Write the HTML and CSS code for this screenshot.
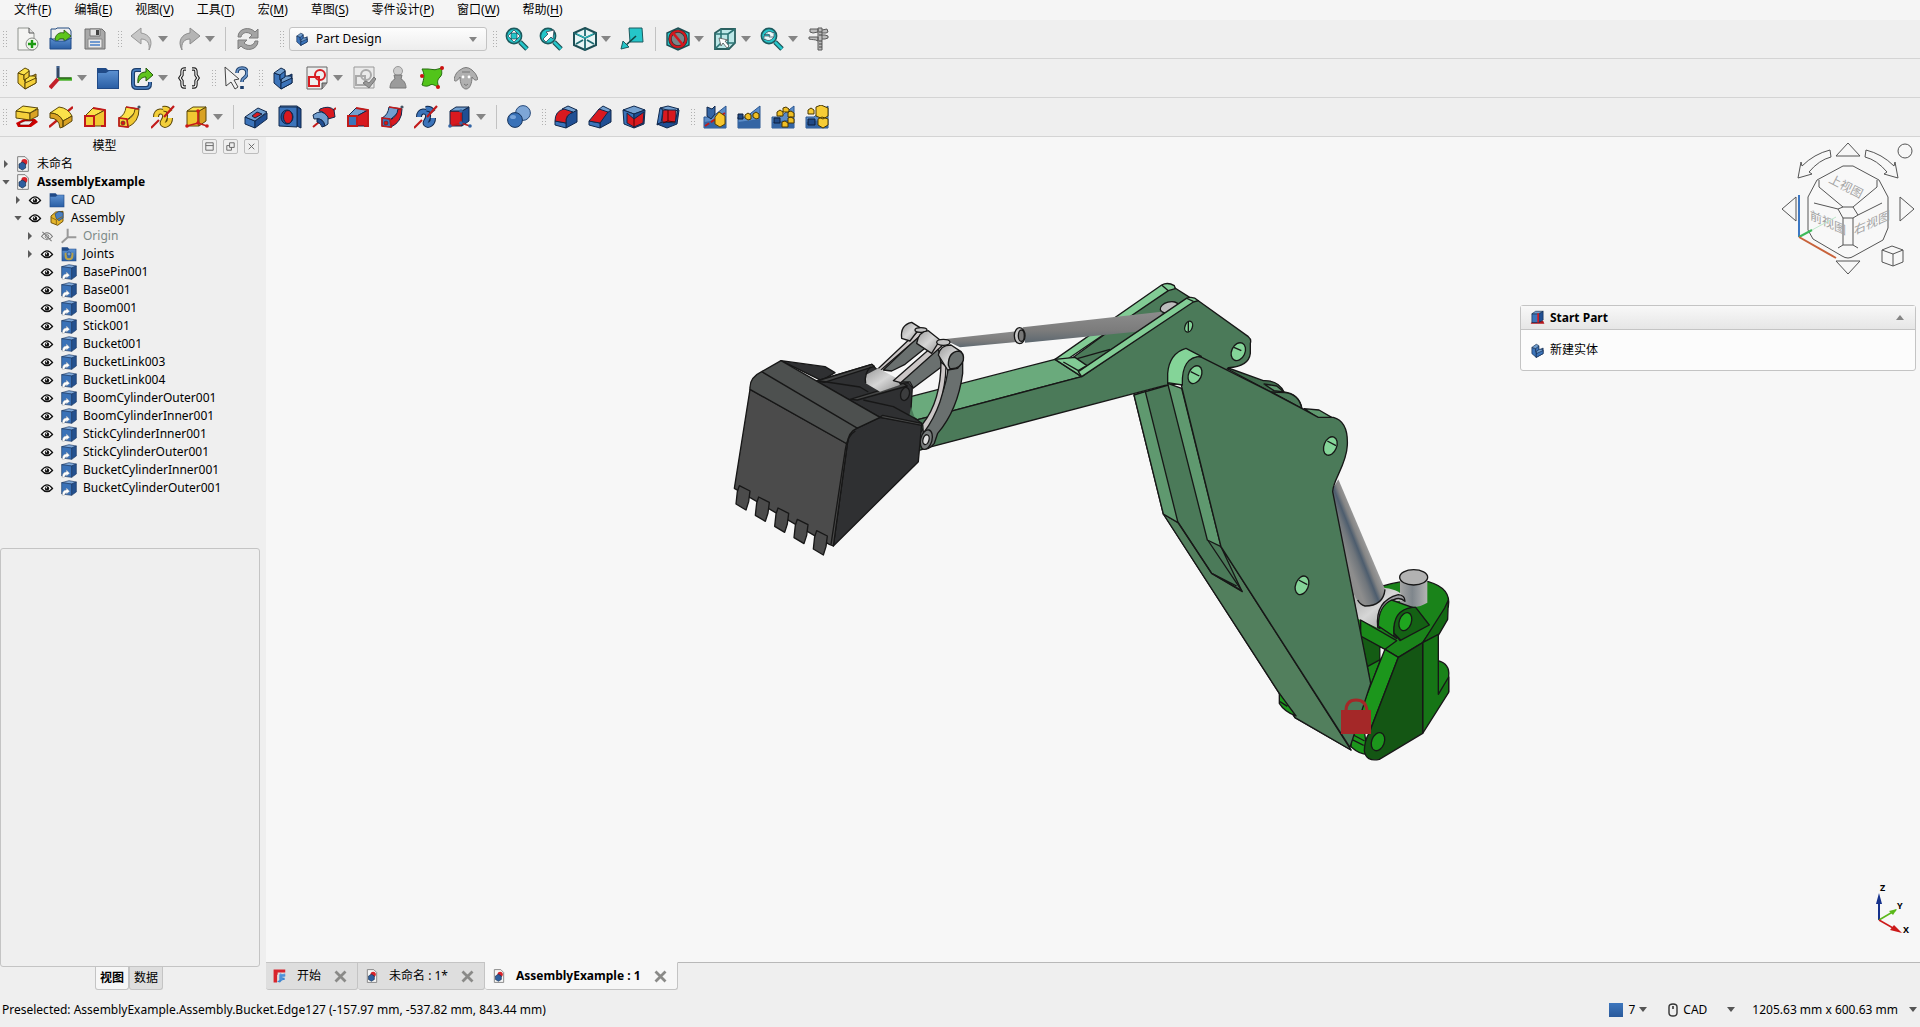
FILE: index.html
```html
<!DOCTYPE html>
<html lang="zh-CN">
<head>
<meta charset="utf-8">
<title>AssemblyExample - FreeCAD</title>
<link rel="stylesheet" href="styles.css">
</head>
<body>
<svg class="defs" aria-hidden="true">
<defs>
<linearGradient id="pin" x1="0" y1="0" x2="1" y2="0"><stop offset="0" stop-color="#a4a4a4"/><stop offset=".45" stop-color="#7f868c"/><stop offset="1" stop-color="#b4b4b4"/></linearGradient>
<linearGradient id="ram" gradientUnits="userSpaceOnUse" x1="322" y1="60" x2="392" y2="32"><stop offset="0" stop-color="#8d8d8d"/><stop offset=".35" stop-color="#6f757b"/><stop offset=".55" stop-color="#4d5d6e"/><stop offset=".72" stop-color="#858585"/><stop offset="1" stop-color="#a2a2a2"/></linearGradient>
<linearGradient id="tube" x1="0" y1="0" x2="0" y2="1"><stop offset="0" stop-color="#8c8c8c"/><stop offset=".6" stop-color="#7c7c7c"/><stop offset="1" stop-color="#5d6870"/></linearGradient>
<linearGradient id="chrome" x1="0" y1="0" x2="1" y2="1"><stop offset="0" stop-color="#9b9b9b"/><stop offset=".5" stop-color="#d6d6d6"/><stop offset="1" stop-color="#8f8f8f"/></linearGradient>
<linearGradient id="blueg" x1="0" y1="0" x2="0" y2="1"><stop offset="0" stop-color="#5b90d0"/><stop offset="1" stop-color="#2b5fa5"/></linearGradient>
</defs>
<symbol id="new" viewBox="0 0 24 24"><path d="M3 1h11l5 5v17H3z" fill="#f4f4f2" stroke="#8f938e"/><path d="M14 1v5h5" fill="#ddd" stroke="#555"/><circle cx="17" cy="17" r="6" fill="#eef6ea" stroke="#888"/><path d="M17 13v8M13 17h8" stroke="#1c9a12" stroke-width="2.4"/></symbol>
<symbol id="open" viewBox="0 0 24 24"><path d="M2 2h5l1-1h12l2 3v8H2z" fill="#eee" stroke="#234a80"/><path d="M6 12c1-6 6-7 9-6V3l7 6-7 6v-3c-4-1-6 0-7 4z" fill="#5fc51c" stroke="#205008" stroke-width=".8"/><path d="M1 11l5 3h10l6-3v11H1z" fill="url(#blueg)" stroke="#204a87"/></symbol>
<symbol id="save" viewBox="0 0 24 24"><path d="M3 2h16l3 3v17H2V2z" fill="#a9a9a9" stroke="#6f6f6f"/><path d="M7 2h10v7H7z" fill="#e6e6e6" stroke="#777"/><path d="M13 3h3v5h-3z" fill="#444"/><path d="M5 12h14v9H5z" fill="#e8e8e8" stroke="#888"/><path d="M7 15h10M7 18h10" stroke="#477fc6" stroke-width="1.4"/></symbol>
<symbol id="undo" viewBox="0 0 24 24"><path d="M1 9l10-8v5c8 1 13 8 8 17 1-7-2-11-8-11v5z" fill="#c6c6c6" stroke="#989898"/></symbol>
<symbol id="redo" viewBox="0 0 24 24"><path d="M23 9L13 1v5C5 7 0 14 5 23c-1-7 2-11 8-11v5z" fill="#b4b4b4" stroke="#8c8c8c"/></symbol>
<symbol id="refresh" viewBox="0 0 24 24"><path d="M2 10c0-9 12-11 17-5l3-3v9h-9l3-3C12 4 6 5 5 10zM22 14c0 9-12 11-17 5l-3 3v-9h9l-3 3c4 4 10 3 11-2z" fill="#a4a4a4" stroke="#7c7c7c"/></symbol>
<symbol id="part" viewBox="0 0 24 24"><g class="edge"><path class="b3" d="M13 12l8-4v9l-11 6v-7z"/><path class="b1" d="M3 7v10l7 6v-7l-1-3V9z"/><path class="b2" d="M3 7l7-5 4 2v6l6 0 1 3-8 5-3-2 1-4-2-3z"/><path class="b1" d="M9 9l5-4v6l-5 3zM10 17l11-5v5l-11 6z"/></g></symbol>
<symbol id="axis" viewBox="0 0 24 24"><path d="M9 12V0" stroke="#41618c" stroke-width="3.2"/><path d="M9 13h14" stroke="#3fae20" stroke-width="3.4"/><path d="M9 13L1 22" stroke="#c3202a" stroke-width="4"/><path d="M10 12h12M9 12V2" stroke="#222" stroke-width=".8"/></symbol>
<symbol id="axisoff" viewBox="0 0 24 24"><path d="M10 14V1M10 14h13M10 14L1 22" stroke="#999" stroke-width="3"/></symbol>
<symbol id="folder" viewBox="0 0 24 24"><path d="M1 2h9l2 2h11v19H1z" fill="#204a87"/><path d="M2 7h8l3-2h9v17H2z" fill="url(#blueg)"/></symbol>
<symbol id="link" viewBox="0 0 24 24"><path d="M11 4H6Q3 4 3 7v11q0 4 4 4h9q4 0 4-4v-2" fill="none" stroke="#1d3f6c" stroke-width="4"/><path d="M11 4H6Q3 4 3 7v11q0 4 4 4h9q4 0 4-4v-2" fill="none" stroke="#4c84c6" stroke-width="1.6"/><path d="M8 17c-1-9 4-11 8-11V2l7 7-7 6v-4c-4 0-6 2-8 6z" fill="#5fc51c" stroke="#245a0c"/></symbol>
<symbol id="braces" viewBox="0 0 24 24"><path d="M9 3H7Q5 3 5 6v3l-2 3 2 3v3q0 3 2 3h2M15 3h2q2 0 2 3v3l2 3-2 3v3q0 3-2 3h-2" fill="none" stroke="#222" stroke-width="3.4"/><path d="M9 3H7Q5 3 5 6v3l-2 3 2 3v3q0 3 2 3h2M15 3h2q2 0 2 3v3l2 3-2 3v3q0 3-2 3h-2" fill="none" stroke="#fff" stroke-width="1.2"/></symbol>
<symbol id="whats" viewBox="0 0 24 24"><path d="M13 7q0-5 5-5t5 5q0 3-3 5-2 1-2 4M18 20v3" fill="none" stroke="#1d3f6c" stroke-width="3.6"/><path d="M13 7q0-5 5-5t5 5q0 3-3 5-2 1-2 4" fill="none" stroke="#6b97cb" stroke-width="1.6"/><path d="M1 1l14 12-5 1 4 7-3 2-4-7-5 4z" fill="#f2f2f2" stroke="#444"/></symbol>
<symbol id="sketch" viewBox="0 0 24 24"><path d="M2 1h20v16l-5 6H2z" fill="#eee" stroke="#666"/><path d="M17 23v-6h5" fill="#999" stroke="#555"/><path d="M4 11h10v9H4z" fill="none" stroke="#d81b20" stroke-width="2"/><circle cx="15" cy="9" r="5" fill="none" stroke="#d81b20" stroke-width="2"/></symbol>
<symbol id="sketchok" viewBox="0 0 24 24"><path d="M2 1h20v21H2z" fill="#eaeaea" stroke="#999"/><path d="M4 10h9v9H4z" fill="none" stroke="#aaa" stroke-width="2"/><circle cx="14" cy="9" r="5" fill="none" stroke="#aaa" stroke-width="2"/><path d="M11 17l3-2 3 2 5-6 2 2-7 9z" fill="#999" stroke="#777"/></symbol>
<symbol id="pawn" viewBox="0 0 24 24"><circle cx="12" cy="5" r="4.5" fill="#ccc" stroke="#999"/><path d="M8 9h8l-1 4c4 2 5 6 5 9H4c0-3 1-7 5-9z" fill="#9b9b9b" stroke="#777"/></symbol>
<symbol id="surface" viewBox="0 0 24 24"><path d="M2 3h6q7 2 14-1c-1 4 1 6-2 9s-3 6-1 10c-3 0-6-4-9-2s-6 1-8 0c2-6 3-11 0-16z" fill="#52c41a" stroke="#236b0c"/><circle cx="22" cy="2" r="2" fill="#c11"/><circle cx="2" cy="10" r="2" fill="#c11"/><circle cx="18" cy="21" r="2" fill="#c11"/></symbol>
<symbol id="sheep" viewBox="0 0 24 24"><path d="M6 4q6-5 12 0 4 3 6 9-3 3-6-2c0 6-2 12-6 12s-6-6-6-12c-3 5-6 5-6 2 2-6 3-7 6-9z" fill="#b0b0b0" stroke="#7a7a7a"/><circle cx="9" cy="11" r="1.4" fill="#fff"/><circle cx="15" cy="11" r="1.4" fill="#fff"/><path d="M10 18q2 3 4 0M8 6h8" stroke="#777" fill="none"/></symbol>
<symbol id="fit" viewBox="0 0 24 24"><path d="M15 15l7 7" stroke="#1c4f53" stroke-width="5"/><path d="M15 15l7 7" stroke="#25c5c9" stroke-width="2.6"/><circle cx="9" cy="9" r="7.6" fill="#25c5c9" stroke="#1c5a5e" stroke-width="1.6"/><path d="M9 3l3 3H6zM9 15l3-3H6zM3 9l3-3v6zM15 9l-3-3v6z" fill="#fff" stroke="#123" stroke-width=".6"/></symbol>
<symbol id="fitsel" viewBox="0 0 24 24"><path d="M15 15l7 7" stroke="#1c4f53" stroke-width="5"/><path d="M15 15l7 7" stroke="#25c5c9" stroke-width="2.6"/><circle cx="9" cy="9" r="7.6" fill="#25c5c9" stroke="#1c5a5e" stroke-width="1.6"/><path d="M15 3l-8 2 2 2-5 5 3 3 5-5 2 2z" fill="#fff" stroke="#345" stroke-width=".8"/></symbol>
<symbol id="viewsync" viewBox="0 0 24 24"><path d="M15 15l7 7" stroke="#1c4f53" stroke-width="5"/><path d="M15 15l7 7" stroke="#25c5c9" stroke-width="2.6"/><circle cx="9" cy="9" r="7.6" fill="#25c5c9" stroke="#1c5a5e" stroke-width="1.6"/><path d="M4 8q5-6 9-2l1-1v5H9l1-2Q7 6 4 8zm10 2q-5 6-9 2l-1 1V9h5" fill="#e6fafa" stroke="#345" stroke-width=".7"/></symbol>
<symbol id="iso" viewBox="0 0 24 24"><path d="M12 1l11 5v12l-11 5-11-5V6z" fill="#e8f6f6" stroke="#1d4f55" stroke-width="2"/><path d="M1 6l11 5 11-5M12 11v12M12 2v7M3 17l7-4M21 17l-7-4" fill="none" stroke="#1d6a70" stroke-width="1.8"/><path d="M4 7l8 4 8-4" fill="none" stroke="#25c5c9" stroke-width="1"/></symbol>
<symbol id="align" viewBox="0 0 24 24"><path d="M9 1h13l1 14H10z" fill="#25c5c9" stroke="#1c5a5e"/><path d="M16 9L5 19" stroke="#144" stroke-width="1.6"/><path d="M1 22l2-8 6 6z" fill="#25c5c9" stroke="#1c5a5e"/></symbol>
<symbol id="nodraw" viewBox="0 0 24 24"><path d="M12 1l11 5v12l-11 5-11-5V6z" fill="#25c5c9" stroke="#1d4f55" stroke-width="1.4"/><circle cx="12" cy="12" r="8" fill="#79868a" stroke="#333" stroke-width="3.6"/><circle cx="12" cy="12" r="8" fill="none" stroke="#d4161d" stroke-width="2.2"/><path d="M7 6l10 12" stroke="#d4161d" stroke-width="2.6"/></symbol>
<symbol id="boxsel" viewBox="0 0 24 24"><path d="M2 6l6-4h14v14l-6 6H2z" fill="#bce8e8" stroke="#2b6060" stroke-width="1.8"/><path d="M2 7h13v15M15 7l7-5M8 2v14h14M8 16l-6 6" fill="none" stroke="#2b7474" stroke-width="1.6"/><path d="M6 11l9 2-3 1 4 5-2 2-4-5-2 3z" fill="#fff" stroke="#555" stroke-width=".8"/></symbol>
<symbol id="caliper" viewBox="0 0 24 24"><path d="M11 1h4v22h-4zM3 2h8v3l-5 1-3-1zM15 3l5-1 1 3-2 1h-4M2 10h9v4c-3-2-6-1-9-2zM15 8h3l3 1v2l-3 1h-3" fill="#bbb" stroke="#5a5a5a"/><path d="M12 14h3M12 17h3M12 20h3M12 5h3M12 8h3" stroke="#444"/></symbol>
<symbol id="pad" viewBox="0 0 24 24"><path d="M1 18l8-4h11l3 3-7 5H3z" fill="#c00"/><path d="M5 18l5-2h8l-4 4H5z" fill="#eee" stroke="#600" stroke-width=".6"/><g class="edge"><path class="b1" d="M1 6l14 2v7L1 13z"/><path class="b3" d="M15 8l8-4v7l-8 4z"/><path class="b2" d="M1 6l7-5 15 2-8 5z"/></g></symbol>
<symbol id="revolve" viewBox="0 0 24 24"><path d="M0 22L24 2" stroke="#c21a1a" stroke-width="2.4"/><g class="edge"><path class="b2" d="M1 8l9-6q9 1 13 9l-9 5Q10 8 1 8z"/><path class="b3" d="M14 16l9-5v5l-9 6zM1 8q9 0 13 8v6l-3 1q-1-10-10-10z"/></g></symbol>
<symbol id="loft" viewBox="0 0 24 24"><g class="edge"><path class="b2" d="M2 11l8-8 12 2-11 6z"/><path class="b4" d="M11 11l11-6v16l-11 0z"/><path class="b1" d="M2 11h9v10H2z"/></g><path d="M10 3l12 2v16l-4 0M2 11h9v10H2z" stroke="#c21a1a" stroke-width="2" fill="none"/></symbol>
<symbol id="sweep" viewBox="0 0 24 24"><g class="edge"><path class="b2" d="M2 13Q8 10 9 2l13 2-12 11z"/><path class="b4" d="M10 15q7-3 8-11l4 0q0 13-11 18z"/><path class="b1" d="M2 13l8 1 1 8-9-1z"/></g><path d="M2 13l8 1 1 8-9-1zM9 2l13 2" stroke="#c21a1a" stroke-width="1.6" fill="none"/><circle cx="6" cy="18" r="2" fill="#d11" stroke="#333" stroke-width=".6"/><circle cx="22" cy="2" r="1.6" fill="#456"/></symbol>
<symbol id="helix" viewBox="0 0 24 24"><path d="M0 23l8-8" stroke="#c21a1a" stroke-width="2.2"/><path class="coilline" d="M5 12C5 5 13 5 14 10S10 17 12 19 19 19 19 13"/><path class="coil" d="M5 12C5 5 13 5 14 10S10 17 12 19 19 19 19 13"/><path class="coilline" d="M12 4q4-1 7 3"/><path class="coil" d="M12 4q4-1 7 3"/><path d="M13 12L23 1" stroke="#c21a1a" stroke-width="2.2"/></symbol>
<symbol id="box" viewBox="0 0 24 24"><g class="edge"><path class="b4" d="M2 6h12v15H2z"/><path class="b3" d="M14 6l7-4v14l-7 5z"/><path class="b2" d="M2 6l6-4h13l-7 4z"/></g><path d="M13 7v11M2 21l11-3 9 3" stroke="#c21a1a" stroke-width="1.6" fill="none"/><g class="dot"><circle cx="13" cy="6" r="1.8"/><circle cx="13" cy="18" r="1.8"/><circle cx="2" cy="21" r="1.8"/><circle cx="22" cy="21" r="1.8"/></g></symbol>
<symbol id="startpart" viewBox="0 0 24 24"><path d="M1 22l3-5h17l2 5z" fill="#b3161c"/><path d="M3 6h11v14H3z" fill="#3c74ba" stroke="#10284c"/><path d="M14 6l7-4v14l-7 4z" fill="#204f94" stroke="#10284c"/><path d="M3 6l6-4h12l-7 4z" fill="#729fcf" stroke="#10284c"/><path d="M13 5v15" stroke="#d9191f" stroke-width="2.6"/></symbol>
<symbol id="pocket" viewBox="0 0 24 24"><g class="edge"><path class="b1" d="M1 12l10 4v7L1 19z"/><path class="b3" d="M11 16l12-8v6l-12 9z"/><path class="b2" d="M1 12L14 3l9 4-12 9z"/><path class="b4" d="M8 11l5-4 5 2-7 4z"/></g></symbol>
<symbol id="hole" viewBox="0 0 24 24"><g class="edge"><path class="b2" d="M2 1h17l4 3H5z"/><path class="b3" d="M19 2l4 2v19l-4-2z"/><path class="b1" d="M1 2h18v20l-18-1z"/><ellipse class="b3" cx="9" cy="12" rx="6" ry="7"/><ellipse class="b4" cx="10" cy="12" rx="4.5" ry="6.5"/></g></symbol>
<symbol id="groove" viewBox="0 0 24 24"><path d="M1 22L24 3" stroke="#c21a1a" stroke-width="2"/><g class="edge"><path class="b4" d="M8 4q9-4 14 1l1 7-7 2q-3-8-9-8z"/><path class="b2" d="M1 10q9-7 15 2v7l-3 2q-2-9-11-7z"/><path class="b3" d="M5 14q6-1 8 7l-3 1q-1-4-5-5z"/></g></symbol>
<symbol id="bool" viewBox="0 0 24 24"><circle cx="16" cy="8" r="7.4" fill="#7ea6d6" stroke="#2a4c7c"/><circle cx="8" cy="15" r="7.4" fill="#3a72b8" stroke="#18345c"/><ellipse cx="6" cy="12" rx="3" ry="2" fill="#78a4da"/></symbol>
<symbol id="fillet" viewBox="0 0 24 24"><g class="edge"><path class="b3" d="M12 17q0-7 7-10l4-2v12l-11 6z"/><path class="b2" d="M8 4l6-3 9 4-5 3z"/><path class="b1" d="M1 16l11 2v5L1 20z"/><path class="b4" d="M1 16q0-10 9-12l9 3q-8 3-7 11z"/></g></symbol>
<symbol id="chamfer" viewBox="0 0 24 24"><g class="edge"><path class="b3" d="M12 18l7-11 4-2v12l-11 6z"/><path class="b2" d="M10 5l5-4 8 4-4 3z"/><path class="b1" d="M1 16l11 2v5L1 20z"/><path class="b4" d="M1 16l10-12 9 3-8 11z"/></g></symbol>
<symbol id="draft" viewBox="0 0 24 24"><g class="edge"><path class="b2" d="M1 5l11-4 11 4-11 4z"/><path class="b1" d="M1 5l11 4v14L2 19z"/><path class="b3" d="M12 9l11-4-1 14-10 4z"/><path class="b4" d="M5 8l7 6 10-7-1 11-9 4-7-4z"/></g><path d="M12 14v8" stroke="#500"/></symbol>
<symbol id="thick" viewBox="0 0 24 24"><g class="edge"><path class="b2" d="M4 3l8-2 11 3-5 3z"/><path class="b1" d="M4 3l3 2-2 13-4 2z"/><path class="b4" d="M7 5h13v12l-14 1z"/><path class="b3" d="M1 19l6-2 12 1 3-14 1 1-2 14-10 4z"/></g><path d="M12 5v11l7 1M12 16l-5 2" stroke="#500" fill="none"/></symbol>
<symbol id="patA" viewBox="0 0 24 24"><path d="M1 12l8 0 14-11v22H1z" fill="#5b8cc8" stroke="#2a5690"/><path d="M1 17l22-3v9H1z" fill="#3465a4"/></symbol>
<symbol id="mirror" viewBox="0 0 24 24"><use href="#patA"/><path d="M2 21L22 8" stroke="#c21a1a" stroke-width="2" stroke-dasharray="5 2"/><path d="M4 2l5 2 3-3v8l-4 5-4-3z" fill="#3465a4" stroke="#12294c"/><path d="M12 12l4-5 6 4v8l-5 3-5-3z" fill="#f6c62e" stroke="#5a4300"/></symbol>
<symbol id="linear" viewBox="0 0 24 24"><use href="#patA"/><path d="M1 9h5v5H1z" fill="#204a87" stroke="#0c1f3c"/><path d="M8 10l3-2 3 2v4l-3 1-3-2zM16 9l3-2 3 2v4l-3 1-3-2z" fill="#f0bf24" stroke="#4a3800"/></symbol>
<symbol id="polar" viewBox="0 0 24 24"><use href="#patA"/><path d="M3 13h6v5H3z" fill="#204a87" stroke="#0c1f3c"/><g fill="#f0bf24" stroke="#4a3800"><path d="M6 7l3-2 3 2v4H6zM12 3l3-1 3 2v3h-6zM17 7l3-1 3 2v4h-6zM11 17l3-1 3 2v4h-6zM17 13l3-1 3 2v4h-6z"/></g></symbol>
<symbol id="multi" viewBox="0 0 24 24"><use href="#patA"/><g fill="#f6cc35" stroke="#4a3800"><path d="M3 5l3-2 3 2v4H3zM11 2l5-2 7 3v8l-5 3-7-3zM13 14l4-2 6 2v6l-5 3-5-3z"/></g><path d="M3 14h7v6H3z" fill="#204a87" stroke="#0c1f3c"/></symbol>
<symbol id="doc" viewBox="0 0 24 24"><path d="M4 1h11l5 5v17H4z" fill="#f5f5f5" stroke="#777" stroke-width="1.4"/><circle cx="14" cy="9" r="4.5" fill="#d8232a"/><path d="M6 12l5-3 5 3v6l-5 3-5-3z" fill="#2f5f9f" stroke="#102846"/></symbol>
<symbol id="eye" viewBox="0 0 14 12"><path d="M1 6q6-8 12 0-6 7-12 0z" fill="#fff" stroke="#111" stroke-width="1.4"/><circle cx="7" cy="6" r="2.4" fill="#111"/><circle cx="6.3" cy="5.2" r=".8" fill="#fff"/></symbol>
<symbol id="eyeoff" viewBox="0 0 14 12"><path d="M1 6q6-8 12 0-6 7-12 0zM2 1l10 10" fill="none" stroke="#777" stroke-width="1.1"/><circle cx="7" cy="6" r="2" fill="none" stroke="#777"/></symbol>
<symbol id="asm" viewBox="0 0 24 24"><path d="M3 9l7-6 11-1v15l-8 6-10-4z" fill="#e5b52b" stroke="#6a4e04" stroke-width="1.4"/><path d="M9 6l6-4 6 2v8l-6 4-4-3z" fill="#4a80c2" stroke="#26406a"/><path d="M3 11l8 4v7M11 15l9-5" stroke="#8a6810" fill="none" stroke-width="1.4"/></symbol>
<symbol id="joints" viewBox="0 0 24 24"><use href="#folder"/><path d="M7 10v5q0 5 5 5t5-5v-5" fill="none" stroke="#b9a24a" stroke-width="3"/><circle cx="12" cy="12" r="3" fill="#6e9bd2" stroke="#204a87"/></symbol>
<symbol id="solid" viewBox="0 0 24 24"><path d="M1 4L12 1l11 2-7 3z" fill="#7fa9da" stroke="#1b3a66"/><path d="M1 4l15 2v17L1 21z" fill="#3a72b8" stroke="#1b3a66"/><path d="M16 6l7-3v15l-7 5z" fill="#24518f" stroke="#1b3a66"/><path d="M2 23q0-8 6-8v-3l5 5-5 4v-2q-2 0-3 4z" fill="#fff" stroke="#999" stroke-width=".6"/></symbol>
<symbol id="fc" viewBox="0 0 24 24"><path d="M1 1h20v5H8v4H7v13H1z" fill="#d8252c"/><path d="M11 9h10v4h-5v2h4v4h-4l-4 4-5-1 4-3z" fill="#3f86cf"/><path d="M12 6l4 3 5-2-1 6-4 3 1 4-6-2z" fill="#5a9be0" opacity=".6"/></symbol>
<symbol id="x" viewBox="0 0 24 24"><path d="M4 4l16 16M20 4L4 20" stroke="#8a8a88" stroke-width="4.5"/></symbol>
<symbol id="down" viewBox="0 0 10 6"><path d="M0 0h10L5 6z"/></symbol>
</svg>

<nav class="menubar">
<button>文件(<u>F</u>)</button><button>编辑(<u>E</u>)</button><button>视图(<u>V</u>)</button><button>工具(<u>T</u>)</button><button>宏(<u>M</u>)</button><button>草图(<u>S</u>)</button><button>零件设计(<u>P</u>)</button><button>窗口(<u>W</u>)</button><button>帮助(<u>H</u>)</button>
</nav>

<div class="toolrow">
<div class="bar"><i class="grip"></i>
<button class="tool" aria-label="新建"><svg><use href="#new"/></svg></button>
<button class="tool" aria-label="打开"><svg><use href="#open"/></svg></button>
<button class="tool" aria-label="保存"><svg><use href="#save"/></svg></button></div>
<div class="bar"><i class="grip"></i>
<button class="tool drop" aria-label="撤销"><svg><use href="#undo"/></svg><svg class="arrow"><use href="#down"/></svg></button>
<button class="tool drop" aria-label="重做"><svg><use href="#redo"/></svg><svg class="arrow"><use href="#down"/></svg></button>
<i class="sep"></i>
<button class="tool" aria-label="刷新"><svg><use href="#refresh"/></svg></button></div>
<div class="bar bench"><i class="grip"></i>
<div class="combo blue"><svg class="comboicon"><use href="#part"/></svg><select aria-label="工作台"><option>Part Design</option></select><svg class="arrow"><use href="#down"/></svg></div></div>
<div class="bar"><i class="grip"></i>
<button class="tool" aria-label="适应全部"><svg><use href="#fit"/></svg></button>
<button class="tool" aria-label="适应选择"><svg><use href="#fitsel"/></svg></button>
<button class="tool drop" aria-label="等轴测"><svg><use href="#iso"/></svg><svg class="arrow"><use href="#down"/></svg></button>
<button class="tool" aria-label="对齐"><svg><use href="#align"/></svg></button>
<i class="sep"></i>
<button class="tool drop" aria-label="绘图样式"><svg><use href="#nodraw"/></svg><svg class="arrow"><use href="#down"/></svg></button>
<button class="tool drop" aria-label="框选"><svg><use href="#boxsel"/></svg><svg class="arrow"><use href="#down"/></svg></button>
<button class="tool drop" aria-label="同步视图"><svg><use href="#viewsync"/></svg><svg class="arrow"><use href="#down"/></svg></button>
<button class="tool" aria-label="测量"><svg><use href="#caliper"/></svg></button></div>
</div>

<div class="toolrow">
<div class="bar"><i class="grip"></i>
<button class="tool yellow" aria-label="零件"><svg><use href="#part"/></svg></button>
<button class="tool drop" aria-label="坐标系"><svg><use href="#axis"/></svg><svg class="arrow"><use href="#down"/></svg></button>
<button class="tool" aria-label="组"><svg><use href="#folder"/></svg></button>
<button class="tool drop" aria-label="链接"><svg><use href="#link"/></svg><svg class="arrow"><use href="#down"/></svg></button>
<button class="tool" aria-label="变量集"><svg><use href="#braces"/></svg></button></div>
<div class="bar"><i class="grip"></i>
<button class="tool" aria-label="这是什么"><svg><use href="#whats"/></svg></button></div>
<div class="bar"><i class="grip"></i>
<button class="tool blue" aria-label="实体"><svg><use href="#part"/></svg></button>
<button class="tool drop" aria-label="草图"><svg><use href="#sketch"/></svg><svg class="arrow"><use href="#down"/></svg></button>
<button class="tool" aria-label="验证草图"><svg><use href="#sketchok"/></svg></button>
<button class="tool" aria-label="检查几何"><svg><use href="#pawn"/></svg></button>
<button class="tool" aria-label="形状绑定"><svg><use href="#surface"/></svg></button>
<button class="tool" aria-label="克隆"><svg><use href="#sheep"/></svg></button></div>
</div>

<div class="toolrow">
<div class="bar"><i class="grip"></i>
<button class="tool yellow" aria-label="凸台"><svg><use href="#pad"/></svg></button>
<button class="tool yellow" aria-label="旋转"><svg><use href="#revolve"/></svg></button>
<button class="tool yellow" aria-label="放样"><svg><use href="#loft"/></svg></button>
<button class="tool yellow" aria-label="扫掠"><svg><use href="#sweep"/></svg></button>
<button class="tool yellow" aria-label="螺旋"><svg><use href="#helix"/></svg></button>
<button class="tool drop yellow" aria-label="添加图元"><svg><use href="#box"/></svg><svg class="arrow"><use href="#down"/></svg></button>
<i class="sep"></i>
<button class="tool blue" aria-label="凹槽"><svg><use href="#pocket"/></svg></button>
<button class="tool blue" aria-label="孔"><svg><use href="#hole"/></svg></button>
<button class="tool blue" aria-label="旋转槽"><svg><use href="#groove"/></svg></button>
<button class="tool blue" aria-label="减料放样"><svg><use href="#loft"/></svg></button>
<button class="tool blue" aria-label="减料扫掠"><svg><use href="#sweep"/></svg></button>
<button class="tool blue" aria-label="减料螺旋"><svg><use href="#helix"/></svg></button>
<button class="tool drop blue" aria-label="减料图元"><svg><use href="#box"/></svg><svg class="arrow"><use href="#down"/></svg></button>
<i class="sep"></i>
<button class="tool" aria-label="布尔"><svg><use href="#bool"/></svg></button></div>
<div class="bar"><i class="grip"></i>
<button class="tool blue" aria-label="圆角"><svg><use href="#fillet"/></svg></button>
<button class="tool blue" aria-label="倒角"><svg><use href="#chamfer"/></svg></button>
<button class="tool blue" aria-label="拔模"><svg><use href="#draft"/></svg></button>
<button class="tool blue" aria-label="抽壳"><svg><use href="#thick"/></svg></button></div>
<div class="bar"><i class="grip"></i>
<button class="tool" aria-label="镜像"><svg><use href="#mirror"/></svg></button>
<button class="tool" aria-label="线性阵列"><svg><use href="#linear"/></svg></button>
<button class="tool" aria-label="环形阵列"><svg><use href="#polar"/></svg></button>
<button class="tool" aria-label="多重变换"><svg><use href="#multi"/></svg></button></div>
</div>

<main class="work">
<aside class="dock">
<header class="dockhead"><h2>模型</h2>
<button aria-label="折叠"><svg viewBox="0 0 14 14"><path d="M3 3h8v8H3zM3 6h8"/></svg></button>
<button aria-label="浮动"><svg viewBox="0 0 14 14"><path d="M6 3h5v5H6zM6 6H3v5h5V8"/></svg></button>
<button aria-label="关闭"><svg viewBox="0 0 14 14"><path d="M4 4l6 6M10 4l-6 6"/></svg></button></header>
<ul class="tree">
<li><b class="tw shut"></b><svg><use href="#doc"/></svg><span>未命名</span></li>
<li class="active"><b class="tw"></b><svg><use href="#doc"/></svg><span>AssemblyExample</span></li>
<li class="l1"><b class="tw shut"></b><svg class="eye"><use href="#eye"/></svg><svg><use href="#folder"/></svg><span>CAD</span></li>
<li class="l1"><b class="tw"></b><svg class="eye"><use href="#eye"/></svg><svg><use href="#asm"/></svg><span>Assembly</span></li>
<li class="l2 dim"><b class="tw shut"></b><svg class="eye"><use href="#eyeoff"/></svg><svg><use href="#axisoff"/></svg><span>Origin</span></li>
<li class="l2"><b class="tw shut"></b><svg class="eye"><use href="#eye"/></svg><svg><use href="#joints"/></svg><span>Joints</span></li>
<li class="l2"><b class="tw none"></b><svg class="eye"><use href="#eye"/></svg><svg><use href="#solid"/></svg><span>BasePin001</span></li>
<li class="l2"><b class="tw none"></b><svg class="eye"><use href="#eye"/></svg><svg><use href="#solid"/></svg><span>Base001</span></li>
<li class="l2"><b class="tw none"></b><svg class="eye"><use href="#eye"/></svg><svg><use href="#solid"/></svg><span>Boom001</span></li>
<li class="l2"><b class="tw none"></b><svg class="eye"><use href="#eye"/></svg><svg><use href="#solid"/></svg><span>Stick001</span></li>
<li class="l2"><b class="tw none"></b><svg class="eye"><use href="#eye"/></svg><svg><use href="#solid"/></svg><span>Bucket001</span></li>
<li class="l2"><b class="tw none"></b><svg class="eye"><use href="#eye"/></svg><svg><use href="#solid"/></svg><span>BucketLink003</span></li>
<li class="l2"><b class="tw none"></b><svg class="eye"><use href="#eye"/></svg><svg><use href="#solid"/></svg><span>BucketLink004</span></li>
<li class="l2"><b class="tw none"></b><svg class="eye"><use href="#eye"/></svg><svg><use href="#solid"/></svg><span>BoomCylinderOuter001</span></li>
<li class="l2"><b class="tw none"></b><svg class="eye"><use href="#eye"/></svg><svg><use href="#solid"/></svg><span>BoomCylinderInner001</span></li>
<li class="l2"><b class="tw none"></b><svg class="eye"><use href="#eye"/></svg><svg><use href="#solid"/></svg><span>StickCylinderInner001</span></li>
<li class="l2"><b class="tw none"></b><svg class="eye"><use href="#eye"/></svg><svg><use href="#solid"/></svg><span>StickCylinderOuter001</span></li>
<li class="l2"><b class="tw none"></b><svg class="eye"><use href="#eye"/></svg><svg><use href="#solid"/></svg><span>BucketCylinderInner001</span></li>
<li class="l2"><b class="tw none"></b><svg class="eye"><use href="#eye"/></svg><svg><use href="#solid"/></svg><span>BucketCylinderOuter001</span></li>
</ul>
<section class="props"></section>
<div class="proptabs"><button class="on">视图</button><button>数据</button></div>
</aside>

<section class="stage">
<div class="viewport">
<svg class="model" viewBox="266 137 1654 825">
<!-- far boom plate -->
<g class="ln" transform="translate(1120 380) scale(.33333)">
<path fill="#3f6b4c" d="M300-45L430 2q45-2 62 34 45 5 54 50l-96-51z"/><path fill="#4b7a59" d="M455 36l40 2q42 5 50 47z"/><path fill="#5f996f" d="M432 12l38 6 22 18-30-4zM552 86l45 4 38 22-40 2z"/>
<path fill="#4b7a59" d="M42 45L145 15l158 485 390 610-168-97L130 402z"/>
<path fill="#527f5d" d="M130 402l45 26 100 152 90 52-62-132 390 610-168-97z"/>
<path fill="#5f996f" d="M42 45l34-10 98 393-44-26z"/>
<path fill="none" d="M174 428l101 152 92 55-104-155M275 580l75 38"/>
</g>
<!-- base -->
<g class="ln" transform="translate(1240 540) scale(.33333)">
<path fill="#1c961c" d="M118 460v30q15 25 50 38zM120 485l22 14"/>
<path fill="#1a831a" d="M335 125l97 12q60-20 133-12 70 20 60 75l-77 108-73 44-40-24-80-40z"/>
<path fill="#146914" d="M625 180l-2 58-28 48-47 22 66-104z"/>
<path fill="#1a831a" d="M594 362q36 10 32 45v48l-34 45z"/>
<path fill="#167516" d="M548 308l47-25v180l31-52v46l-78 123z"/>
<path fill="#145c14" d="M362 287l58 31v44l-38 20z"/>
<path fill="#1a8a1a" d="M382 380l40-22-30 80z"/>
<path fill="#f7f7f7" stroke="none" d="M422 323l12 5-12 26z"/>
<path fill="#1c961c" d="M435 328l40 24-85 220-57 11 32-80z"/>
<path fill="#1c961c" d="M333 583l40-10 10 70q-25 0-50-23zM335 598l36 18M340 585l34 18"/>
<path fill="#145614" d="M475 352l73-44v272l-130 78q-40 8-45-25 0-30 15-55z"/>
<ellipse fill="#1c961c" cx="414" cy="605" rx="19" ry="28" transform="rotate(20 414 605)"/>
<path fill="url(#pin)" d="M480 112v76q40 25 82 0v-76z" stroke="none"/>
<ellipse fill="#b2b2b2" cx="521" cy="112" rx="42" ry="23"/>
<path fill="url(#chrome)" d="M335 130l100 14q50 5 60 36l-60 10q-26 30-22 74l-60-28z" stroke="none"/>
<path fill="#9a9a9e" d="M413 262q-8-80 62-98 20 2 20 20-20-20-50 6-30 30-25 75z"/>
<path fill="#1c961c" d="M415 258q0-60 40-78l62 22q-60 20-55 85l8 8z"/>
<path fill="#146114" d="M462 280q-5-70 55-78h10l41 53-88 47zM462 280l20 20"/>
<path fill="#1a8a1a" d="M362 240l108 62-35 26-73-40z"/>
<ellipse fill="#1fa51f" cx="496" cy="245" rx="18" ry="28" transform="rotate(20 496 245)"/>
<path fill="url(#ram)" stroke="none" d="M270-140l25-42 140 330q-5 50-60 50-25-4-42-60z"/>
<path fill="none" d="M435 148q-5 50-60 50-15-4-22-18"/>
</g>
<!-- stick and its cylinder -->
<g class="ln" transform="translate(900 270) scale(.33333)">
<path fill="#4b7a59" d="M520 262l280-205 25-3 50 32-330 225z"/>
<path fill="#82cc95" d="M465 268L785 45q18-10 38 2l3 9-21 6-315 214z"/><path fill="none" d="M785 45l20 17"/>
<path fill="none" d="M500 275l130-37"/>
<ellipse fill="#bdbdbd" cx="808" cy="112" rx="28" ry="16" transform="rotate(-15 808 112)"/>
<path fill="url(#tube)" stroke="none" d="M130 208l220-24v32l-170 16z"/>
<path fill="url(#tube)" stroke="none" d="M368 172l417-47v53l-410 40z"/>
<ellipse fill="#c8c8c8" cx="359" cy="197" rx="16" ry="24"/><ellipse fill="#777" cx="364" cy="197" rx="9" ry="17"/>
<path fill="#6aaa7c" d="M20 383l445-115 80 52-385 102-140 35z"/>
<path fill="#82cc95" d="M465 268l60-6 35 24-15 34z"/><path fill="none" d="M490 276l45 26 20-12"/>
<path fill="#4b7a59" d="M20 457l140-35 385-102L880 92h15l150 108q10 8 6 20v30q-5 40-66 43l-30 35-160 18L95 530l-40 12z"/>
<path fill="#82cc95" d="M545 320l-10-15L858 86q20-10 37 6l-15 4z"/><path fill="none" d="M858 84l22 10"/>
<g fill="#84d498"><ellipse cx="866" cy="170" rx="11" ry="17" transform="rotate(20 866 170)"/><ellipse cx="1015" cy="245" rx="20" ry="28" transform="rotate(25 1015 245)"/></g><path fill="none" d="M865 155v30M1002 232l22 10"/>
</g>
<!-- near boom plate -->
<g class="ln" transform="translate(1120 380) scale(.33333)">
<path fill="#5f996f" d="M143 10l42 15 118 475-41-20z"/>
<path fill="#4b7a59" d="M183-10q2-50 50-62l12 4L450 35l95 50 50 27h45q45 12 42 83c-2 60-44 105-44 140l114 575-62 192-387-602L185 20z"/>
<path fill="#84d498" d="M143 8V-20q5-60 55-75l46 24q-60 0-57 86z"/>
<g fill="#84d498"><ellipse cx="225" cy="-16" rx="19" ry="28" transform="rotate(25 225 -16)"/><ellipse cx="631" cy="198" rx="19" ry="29" transform="rotate(22 631 198)"/><ellipse cx="546" cy="616" rx="19" ry="29" transform="rotate(22 546 616)"/></g>
<path fill="none" d="M212-25l26 13M622 183l26 14M536 600l26 14"/>
</g>
<path fill="none" stroke="#a42828" stroke-width="3" d="M1346 711q0-11 10-11t11 11"/><path fill="#a42828" d="M1341 710h30v24h-30z"/>
<!-- bucket and links -->
<g class="ln" transform="translate(720 310) scale(.33333)">
<path fill="#2f3032" d="M183 152l132 18 30 18-40 24z"/>
<path fill="#2f3032" d="M290 213l165-50 20 20-30 40 120-5 12 14-5 83 33 25-125-18z"/>
<path fill="#454646" d="M290 213l165-50 8 6-150 48zM390 268l160-48 12 8-150 42z"/>
<path fill="#4b7a59" stroke="none" d="M573 290l12 36-17-8z"/>
<path fill="#6a706f" d="M490 180l110-105 30 28-75 60-40 20z"/>
<path fill="#cbc6c6" d="M468 182L592 65l18 4-128 112z"/>
<path fill="url(#chrome)" d="M437 195l38-20 55 30 10 20-60 20-43-25z" stroke="none"/><path fill="none" d="M452 170q-20 20-15 50"/>
<path fill="#6a706f" d="M540 215L655 115l10 55-85 64-10-18z"/>
<path fill="#cbc6c6" d="M520 212L650 98l18 8-126 112z"/>
<path fill="url(#chrome)" d="M545 85q-5-40 30-48l25 16-30 40z"/><ellipse fill="#c4c4c4" cx="603" cy="60" rx="18" ry="7"/>
<path fill="url(#chrome)" d="M590 100q5-35 35-38l35 28-25 40z"/><ellipse fill="#c4c4c4" cx="670" cy="97" rx="20" ry="9"/>
<path fill="#6a706f" d="M685 165l43-25v50q-15 110-75 180l-10 30q-20 25-38 12l-5-42q80-110 85-205z"/>
<path fill="#cbc6c6" d="M663 155l15 15q-2 110-68 200l-2-28q55-70 55-187z"/>
<path fill="url(#chrome)" d="M655 135q5-30 38-30l30 20q15 20-10 50l-30 5z"/><path fill="#6a706f" d="M685 165q0-40 32-42 16 5 13 28-10 28-40 25z"/>
<ellipse fill="#777b7b" cx="619" cy="389" rx="17" ry="30" transform="rotate(15 619 389)"/><ellipse fill="#ddd" cx="618" cy="389" rx="9" ry="15" transform="rotate(15 618 389)"/>
<ellipse fill="#3c3d3e" cx="555" cy="252" rx="13" ry="20" transform="rotate(15 555 252)"/>
<path fill="#2f3032" d="M382 402q5-40 28-47l70-33 125 20-10 113-255 253z"/>
<path fill="#474848" d="M480 322l8-6 117 24v6z"/>
<path fill="#4b4b4b" d="M90 238l292 164-42 306-12-5L43 535z"/>
<path fill="#4d504f" d="M90 238q-3-35 35-53l58-33 297 170-70 33q-25 10-28 47z"/>
<path fill="none" d="M125 185l288 170M333 703l43-285q5-40 30-55M300 213l120 18 25 15M430 270l90 20 70 38"/>
<g fill="#4b4b4b"><path id="tooth" d="M52 545l6-18 32 16-4 32-8 25-30-18z"/><use href="#tooth" x="58" y="34"/><use href="#tooth" x="116" y="67"/><use href="#tooth" x="174" y="101"/><use href="#tooth" x="232" y="135"/></g>
</g>
</svg>
<svg class="cube" viewBox="1780 137 140 145">
<g fill="none" stroke="#555">
<path d="M1836 156l12-13 12 13zM1836 261l12 13 12-13zM1796 197l-14 12 14 12zM1900 197l14 12-14 12z"/><circle cx="1905" cy="151" r="7"/>
<path d="M1830 150q-16 4-28 16l-1-4-3 16 14-4-3-2q10-12 22-15zM1866 150q16 4 28 16l1-4 3 16-14-4 3-2q-10-12-22-15z"/>
<path fill="#f8f8f8" d="M1843 166h10l26 14 9 17v31l-5 12-29 16q-6 4-12 0l-29-17-5-9v-33l9-17z"/>
<path d="M1819 180v7l24 20h10l24-20v-7M1814 203l24 6 5-2M1853 207l5 8 24-12M1838 209l5 9h10l5-3M1843 218v27M1853 218v27M1838 248l5-3h10l5 3"/>
<path d="M1882 250l10-4 11 4v12l-10 4-11-4zM1882 250l11 4 10-4M1893 254v12"/>
</g>
<g class="cubetext"><text transform="translate(1828 182) rotate(27)">上视图</text><text transform="translate(1810 219) skewY(24)">前视图</text><text transform="translate(1854 235) skewY(-24)">右视图</text></g>
<path d="M1799 195v42" stroke="#3d78c4" stroke-width="2"/><path d="M1799 237l13-7" stroke="#3fba5a" stroke-width="2"/><path d="M1812 230l24-13" stroke="#bfe8c8"/><path d="M1799 237l37 21" stroke="#c8623a" stroke-width="2"/>
</svg>
<svg class="axes" viewBox="1870 880 50 60"><path d="M1879 920v-17" stroke="#16328c" stroke-width="2"/><path d="M1879 893l3 11h-6z" fill="#16328c"/><path d="M1879 920l17-10" stroke="#5bb81a" stroke-width="1.5"/><path d="M1897 909l-4 6-4-4z" fill="#5bb81a"/><path d="M1879 920l14 8" stroke="#cc1a1a" stroke-width="1.5"/><path d="M1902 933l-8-8-4 5z" fill="#cc1a1a"/><text x="1880" y="891">Z</text><text x="1897" y="909">Y</text><text x="1903" y="933">X</text></svg>
<section class="task"><header><svg><use href="#startpart"/></svg><h3>Start Part</h3><svg class="fold" viewBox="0 0 10 6"><path d="M0 6h10L5 0z"/></svg></header>
<div class="taskbody blue"><button><svg><use href="#part"/></svg>新建实体</button></div></section>
</div>
<div class="mdi">
<div class="tab"><svg><use href="#fc"/></svg><button class="name">开始</button><button class="close" aria-label="关闭"><svg><use href="#x"/></svg></button></div>
<div class="tab"><svg><use href="#doc"/></svg><button class="name">未命名 : 1*</button><button class="close" aria-label="关闭"><svg><use href="#x"/></svg></button></div>
<div class="tab on"><svg><use href="#doc"/></svg><button class="name">AssemblyExample : 1</button><button class="close" aria-label="关闭"><svg><use href="#x"/></svg></button></div>
</div>
</section>
</main>

<footer class="status">
<span class="msg">Preselected: AssemblyExample.Assembly.Bucket.Edge127 (-157.97 mm, -537.82 mm, 843.44 mm)</span>
<button class="note"><i class="swatch"></i>7<svg class="arrow"><use href="#down"/></svg></button>
<button class="nav"><svg class="mouse" viewBox="0 0 10 14"><path d="M1 4q0-3 4-3t4 3v6q0 3-4 3t-4-3z" fill="none" stroke="#333" stroke-width="1.4"/><path d="M5 3v3" stroke="#333" stroke-width="1.6"/></svg><span>CAD</span><svg class="arrow"><use href="#down"/></svg></button>
<button class="size">1205.63 mm x 600.63 mm<svg class="arrow"><use href="#down"/></svg></button>
</footer>
</body>
</html>
```
FILE: styles.css
```css
* { box-sizing: border-box; }
body {
  margin: 0;
  min-height: 100vh;
  display: flex;
  flex-direction: column;
  background: #efefef;
  color: #000;
  font: 12px/18px "Noto Sans", "Noto Sans CJK SC", sans-serif;
}
button, select { font: inherit; color: inherit; background: none; border: 0; padding: 0; margin: 0; }
h2, h3 { margin: 0; font-size: 12px; font-weight: 400; }
svg { display: block; flex: none; }
.defs { position: absolute; width: 0; height: 0; }

/* icon palettes */
.yellow { --b1: #f3cf3a; --b2: #fbe24a; --b3: #d9a224; --b4: #f0c832; --dot: #cc1a1a; --line: #5b4708; }
.blue { --b1: #3c74ba; --b2: #729fcf; --b3: #204f94; --b4: #d9191f; --dot: #3465a4; --line: #10284c; }
.b1 { fill: var(--b1); }
.b2 { fill: var(--b2); }
.b3 { fill: var(--b3); }
.b4 { fill: var(--b4); }
.dot { fill: var(--dot); }
.edge { stroke: var(--line); stroke-width: 1; stroke-linejoin: round; }
.coilline { fill: none; stroke: var(--line); stroke-width: 6; }
.coil { fill: none; stroke: var(--b1); stroke-width: 4; }

.menubar { display: flex; gap: 1px; height: 20px; background: #f5f5f5; padding-left: 3px; }
.menubar button { padding: 0 11px; line-height: 20px; }
.menubar u { text-underline-offset: 2px; }

.toolrow { display: flex; height: 39px; padding-left: 2px; border-bottom: 1px solid #d4d4d4; align-items: center; }
.bar { display: flex; align-items: center; gap: 4px; margin-right: 7px; }
.grip { width: 6px; height: 18px; background: radial-gradient(circle, #b0b0b0 1px, transparent 1px) 0 0 / 3px 3px; }
.tool { display: flex; align-items: center; width: 30px; height: 30px; padding-left: 3px; }
.tool svg { width: 24px; height: 24px; }
.tool.drop { width: 43px; }
.tool .arrow { width: 10px; height: 6px; margin-left: 4px; }
.arrow { width: 8px; height: 5px; fill: #858585; }
.sep { width: 8px; height: 24px; background: linear-gradient(#c2c2c2, #c2c2c2) center / 1px 100% no-repeat; }
.bench { margin-left: 9px; margin-right: 5px; }
.combo { position: relative; width: 198px; height: 24px; }
.combo select { appearance: none; width: 100%; height: 24px; border: 1px solid #c3c3c3; border-radius: 3px; background: linear-gradient(#fdfdfd, #ededed); padding-left: 26px; }
.comboicon { position: absolute; left: 6px; top: 5px; width: 14px; height: 14px; }
.combo .arrow { position: absolute; right: 10px; top: 10px; }

.work { flex: 1; display: flex; min-height: 0; }
.dock { width: 266px; flex: none; display: flex; flex-direction: column; }
.dockhead { display: flex; align-items: center; gap: 6px; height: 18px; padding: 0 7px 0 13px; }
.dockhead h2 { flex: 1; text-align: center; }
.dockhead button { width: 15px; height: 15px; border: 1px solid #bdbdbd; border-radius: 2px; }
.dockhead svg { width: 13px; height: 13px; fill: none; stroke: #666; }
.tree { list-style: none; margin: 0; padding: 0; flex: 394 0 0; }
.tree li { display: flex; align-items: center; height: 18px; }
.tree .l1 { padding-left: 12px; }
.tree .l2 { padding-left: 24px; }
.tree svg { width: 22px; height: 16px; margin-right: 3px; }
.tree .eye { height: 11px; margin-right: 0; }
.tree .active { font-weight: 700; }
.tree .dim { color: #7d8a87; }
.tw { width: 12px; height: 5px; background: #5b5b5b; clip-path: polygon(2px 0, 10px 0, 6px 5px); }
.tw.shut { height: 8px; clip-path: polygon(4px 0, 8px 4px, 4px 8px); }
.tw.none { visibility: hidden; }
.props { flex: 419 0 0; margin-right: 6px; border: 1px solid #c4c4c4; border-radius: 3px; }
.proptabs { display: flex; height: 23px; padding-left: 95px; }
.proptabs button { width: 34px; border: 1px solid #c4c4c4; border-top: 0; border-radius: 0 0 3px 3px; background: #dedede; }
.proptabs .on { background: #f7f7f7; font-weight: 700; }

.stage { flex: 1; min-width: 0; display: flex; flex-direction: column; }
.viewport { flex: 1; position: relative; min-height: 0; background: #f7f7f7; }
.model { position: absolute; width: 100%; height: 100%; }
.ln { stroke: #171717; stroke-width: 4; stroke-linejoin: round; }
.cube { position: absolute; right: 0; top: 0; width: 140px; height: 145px; }
.cubetext { font-size: 12px; fill: #a2a2a2; }
.axes { position: absolute; right: 0; bottom: 22px; width: 50px; height: 60px; }
.axes text { font-size: 9px; font-weight: 700; }
.task { position: absolute; right: 4px; top: 168px; width: 396px; border: 1px solid #c4c4c4; border-radius: 3px; background: #fcfcfc; }
.task header { display: flex; align-items: center; gap: 5px; height: 24px; padding: 0 11px 0 9px; border-bottom: 1px solid #c4c4c4; background: linear-gradient(#f8f8f8, #e6e6e6); }
.task header svg, .taskbody svg { width: 15px; height: 15px; }
.task h3 { flex: 1; font-weight: 700; }
.task header .fold { width: 8px; height: 5px; fill: #858585; }
.taskbody { padding: 11px 9px; }
.taskbody button { display: flex; align-items: center; gap: 5px; }

.mdi { display: flex; height: 28px; background: linear-gradient(#b8b8b8, #b8b8b8) top / 100% 1px no-repeat; }
.tab { display: flex; align-items: center; padding: 0 9px 0 7px; background: #dedede; border: 1px solid #c4c4c4; border-left-width: 0; border-radius: 0 0 3px 3px; }
.tab svg { width: 14px; height: 16px; }
.tab .name { padding: 0 12px 0 10px; }
.tab.on { background: #f7f7f7; border-top-color: #f7f7f7; font-weight: 700; }
.tab .close svg { width: 15px; height: 15px; }

.status { display: flex; align-items: center; height: 37px; padding: 2px 3px 0 2px; }
.status button { display: flex; align-items: center; }
.status .msg { flex: 1; }
.status .arrow { fill: #555; }
.swatch { width: 14px; height: 14px; margin-right: 5px; background: linear-gradient(#3d76bd, #2a5a9b); }
.note .arrow { margin-left: 4px; }
.nav { margin: 0 17px 0 21px; }
.mouse { width: 10px; height: 14px; margin-right: 5px; }
.nav .arrow { margin-left: 20px; }
.size .arrow { margin-left: 11px; }
```
